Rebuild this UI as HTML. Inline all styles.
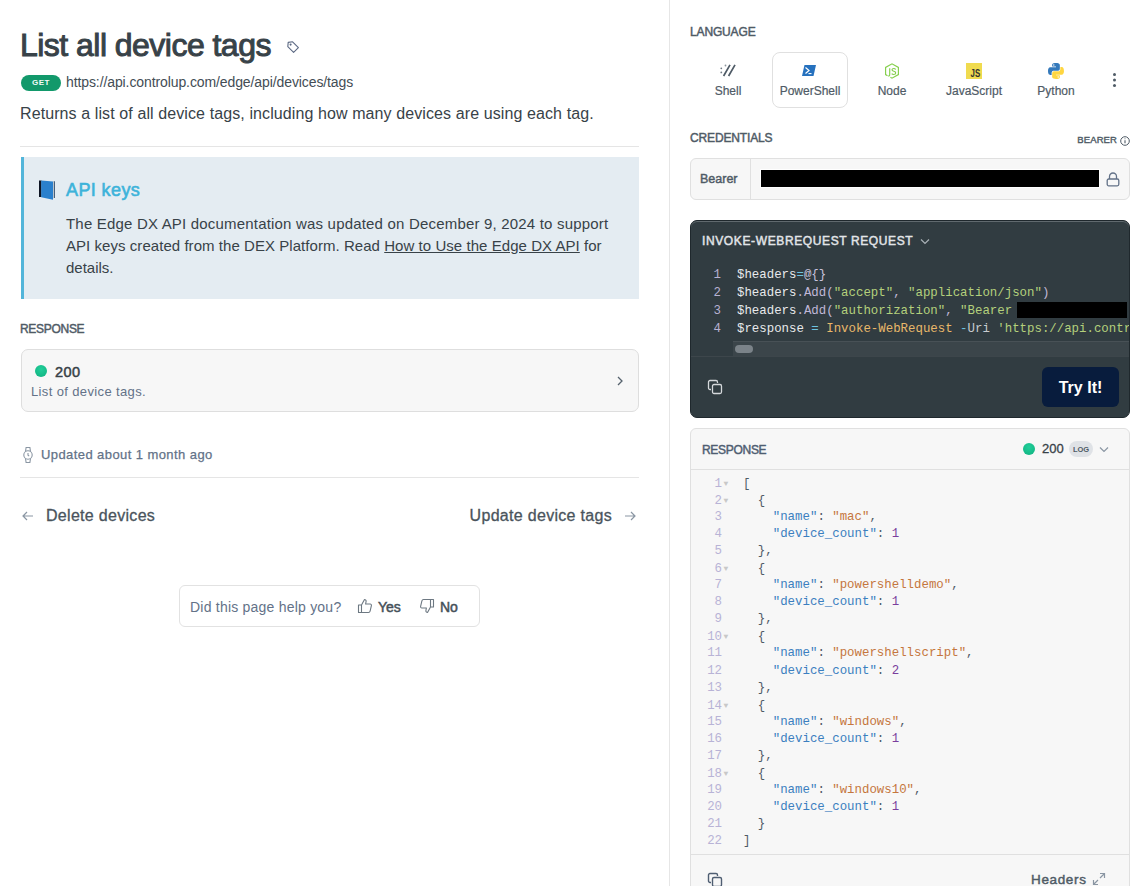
<!DOCTYPE html>
<html><head><meta charset="utf-8">
<style>
*{box-sizing:border-box;margin:0;padding:0}
html,body{width:1137px;height:886px;overflow:hidden;background:#fff;font-family:"Liberation Sans",sans-serif;color:#384248}
.abs{position:absolute}
#left{position:absolute;left:0;top:0;width:669px;height:886px}
#divider{position:absolute;left:669px;top:0;width:1px;height:886px;background:#e6e6e6}
#right{position:absolute;left:670px;top:0;width:467px;height:886px}
.mono{font-family:"Liberation Mono",monospace}
.lbl{font-size:12px;font-weight:normal;-webkit-text-stroke:.45px currentColor;letter-spacing:-.15px;color:#4f5b66;text-transform:uppercase}

.tab{top:84px;width:76px;text-align:center;font-size:12px;color:#4f5b66;white-space:nowrap;-webkit-text-stroke:.2px currentColor}
.code{font-size:12.4px;line-height:18px;white-space:normal}
.code .ln{height:18px;white-space:pre}
.code .n{display:inline-block;width:47px;padding-right:16px;text-align:right;color:#b7b1d1}
.rcode{font-size:12.4px;line-height:17.05px;white-space:normal}
.rcode .ln{height:17.05px;white-space:pre;color:#4f5b66}
.rcode .n{display:inline-block;width:31px;text-align:right;color:#b8b3d6}
.rcode .f{display:inline-block;width:21px;color:#c8c8c8;font-size:8px;vertical-align:1px;padding-left:1.5px}
.k{color:#3b7fc0}.s{color:#c5763d}.d{color:#7a3e9d}
</style></head><body>
<div id="left">
  <div class="abs" style="left:20px;top:26px;font-size:32px;line-height:38px;font-weight:normal;-webkit-text-stroke:1px #384248;letter-spacing:-0.53px;color:#384248;white-space:nowrap">List all device tags</div>
  <svg class="abs" style="left:286px;top:40px" width="14" height="14" viewBox="0 0 14 14" fill="none" stroke="#5d6a84" stroke-width="1.1" stroke-linejoin="round"><path d="M2.2 2.4L6.6 1.8 12.4 7.6 7.6 12.4 1.8 6.6z"/><circle cx="4.6" cy="4.6" r=".5" fill="#5d6a84"/></svg>
  <div class="abs" style="left:21px;top:75px;width:40px;height:16px;border-radius:8px;background:#12996b;color:#f4fbf8;font-size:8px;font-weight:bold;letter-spacing:.55px;text-align:center;line-height:16px">GET</div>
  <div class="abs" style="left:66px;top:73px;font-size:14px;letter-spacing:-0.1px;color:#434d55;white-space:nowrap;line-height:18px">https://api.controlup.com/edge/api/devices/tags</div>
  <div class="abs" style="left:20px;top:103px;font-size:16px;letter-spacing:.1px;color:#384248;white-space:nowrap;line-height:22px">Returns a list of all device tags, including how many devices are using each tag.</div>
  <div class="abs" style="left:20px;top:146px;width:619px;height:1px;background:#e5e5e5"></div>
  <!-- callout -->
  <div class="abs" style="left:21px;top:157px;width:618px;height:142px;background:#e4ecf2;border-left:3px solid #52b5da"></div>
  <svg class="abs" style="left:38px;top:179px" width="18" height="21" viewBox="0 0 18 21"><path d="M1 1.5h2.5v16.5H1z" fill="#0e1524"/><path d="M15.6 2.2h1.3v16.8h-1.3z" fill="#35506e"/><path d="M14.8 2.2h.9v17.2h-.9z" fill="#c8cdd2"/><path d="M3.2 1.6L15 2.4v18.4L3.2 18.2z" fill="#2a80cd"/></svg>
  <div class="abs" style="left:66px;top:179px;font-size:18px;font-weight:normal;-webkit-text-stroke:.6px currentColor;letter-spacing:.4px;color:#3db3da;white-space:nowrap;line-height:22px">API keys</div>
  <div class="abs" style="left:66px;top:213px;font-size:15px;line-height:22px;color:#384248;white-space:nowrap"><span style="letter-spacing:.19px">The Edge DX API documentation was updated on December 9, 2024 to support</span><br><span style="letter-spacing:.05px">API keys created from the DEX Platform. Read <span style="text-decoration:underline">How to Use the Edge DX API</span> for</span><br>details.</div>
  <!-- response -->
  <div class="abs lbl" style="left:20px;top:322px;letter-spacing:-.3px">Response</div>
  <div class="abs" style="left:21px;top:349px;width:618px;height:63px;background:#f7f7f7;border:1px solid #dedede;border-radius:7px"></div>
  <div class="abs" style="left:35px;top:365px;width:12px;height:12px;border-radius:50%;background:radial-gradient(circle at 50% 35%,#22cf9a,#0fb07f)"></div>
  <div class="abs" style="left:55px;top:364px;font-size:14.5px;letter-spacing:.4px;font-weight:normal;-webkit-text-stroke:.5px currentColor;color:#384248">200</div>
  <div class="abs" style="left:31px;top:384px;font-size:13px;letter-spacing:.37px;color:#637288;white-space:nowrap">List of device tags.</div>
  <svg class="abs" style="left:614px;top:375px" width="12" height="12" viewBox="0 0 12 12" fill="none" stroke="#56626d" stroke-width="1.3"><path d="M4 2l4 4-4 4"/></svg>
  <!-- updated -->
  <svg class="abs" style="left:22px;top:446px" width="13" height="18" viewBox="0 0 13 18" fill="none" stroke="#8a96a3" stroke-width="1.1"><circle cx="6" cy="9" r="4.2"/><path d="M6 7v2.2l1.2 1M3.5 5.5l.6-4h3.8l.6 4M3.5 12.5l.6 4h3.8l.6-4"/></svg>
  <div class="abs" style="left:41px;top:447px;font-size:13px;letter-spacing:.42px;-webkit-text-stroke:.25px currentColor;color:#637288;white-space:nowrap">Updated about 1 month ago</div>
  <div class="abs" style="left:20px;top:477px;width:619px;height:1px;background:#e5e5e5"></div>
  <!-- nav -->
  <svg class="abs" style="left:21px;top:509px" width="14" height="14" viewBox="0 0 14 14" fill="none" stroke="#8a96a3" stroke-width="1.2"><path d="M12 7H2M6 3L2 7l4 4"/></svg>
  <div class="abs" style="left:46px;top:507px;font-size:16px;letter-spacing:.3px;-webkit-text-stroke:.3px currentColor;color:#4a545c;white-space:nowrap">Delete devices</div>
  <div class="abs" style="left:369px;top:507px;width:243px;font-size:16px;letter-spacing:.3px;-webkit-text-stroke:.3px currentColor;color:#4a545c;white-space:nowrap;text-align:right">Update device tags</div>
  <svg class="abs" style="left:623px;top:509px" width="14" height="14" viewBox="0 0 14 14" fill="none" stroke="#8a96a3" stroke-width="1.2"><path d="M2 7h10M8 3l4 4-4 4"/></svg>
  <!-- feedback -->
  <div class="abs" style="left:179px;top:585px;width:301px;height:42px;border:1px solid #e2e2e2;border-radius:6px"></div>
  <div class="abs" style="left:190px;top:599px;font-size:14px;letter-spacing:.22px;color:#637288;white-space:nowrap">Did this page help you?</div>
  <svg class="abs" style="left:357px;top:598px" width="16" height="16" viewBox="0 0 16 16" fill="none" stroke="#6d7882" stroke-width="1.1" stroke-linejoin="round"><path d="M1.5 7h3v7.5h-3zM4.5 7l3-5.5c1 0 1.8.8 1.6 1.8L8.6 6h4.6c.8 0 1.4.8 1.2 1.6l-1.3 5.6c-.2.8-.8 1.3-1.6 1.3H4.5"/></svg>
  <div class="abs" style="left:378px;top:599px;font-size:14px;letter-spacing:0px;font-weight:normal;-webkit-text-stroke:.5px currentColor;color:#46515a">Yes</div>
  <svg class="abs" style="left:419px;top:598px" width="16" height="16" viewBox="0 0 16 16" fill="none" stroke="#6d7882" stroke-width="1.1" stroke-linejoin="round"><g transform="rotate(180 8 8)"><path d="M1.5 7h3v7.5h-3zM4.5 7l3-5.5c1 0 1.8.8 1.6 1.8L8.6 6h4.6c.8 0 1.4.8 1.2 1.6l-1.3 5.6c-.2.8-.8 1.3-1.6 1.3H4.5"/></g></svg>
  <div class="abs" style="left:440px;top:599px;font-size:14px;letter-spacing:0px;font-weight:normal;-webkit-text-stroke:.5px currentColor;color:#46515a">No</div>
</div>
<div id="divider"></div>
<div id="right">
  <div class="abs lbl" style="left:20px;top:25px">Language</div>
  <!-- tabs -->
  <div class="abs" style="left:102px;top:52px;width:76px;height:56px;border:1px solid #e0e0e0;border-radius:8px"></div>
  <svg class="abs" style="left:50px;top:64px" width="17" height="13" viewBox="0 0 17 13"><path d="M10 .8L3.6 12M15 .8L8.6 12" stroke="#4f5b66" stroke-width="1.7" stroke-linecap="butt"/><circle cx="1.3" cy="4.3" r=".9" fill="#6f7a84"/><circle cx="1.3" cy="8.4" r=".9" fill="#6f7a84"/><circle cx="5.5" cy="1.5" r=".9" fill="#8d969e"/></svg>
  <div class="abs tab" style="left:20px">Shell</div>
  <svg class="abs" style="left:132px;top:65px" width="14" height="11" viewBox="0 0 14 11"><path d="M2.5 0H14L11.5 11H0z" fill="#2671be"/><path d="M3.5 2.5L7 5.5 3.5 8.5" fill="none" stroke="#fff" stroke-width="1.2"/><path d="M6.5 8.6h3" stroke="#fff" stroke-width="1.1"/></svg>
  <div class="abs tab" style="left:102px">PowerShell</div>
  <svg class="abs" style="left:214px;top:63px" width="16" height="16" viewBox="0 0 16 16" fill="none" stroke="#84cf4b" stroke-width="1.15"><path d="M6.4 14.3L8 15.2 14.4 11.6V4.4L8 .8 1.6 4.4v7.2l1.9 1.1"/><path d="M5.7 5.2v6.6q0 1.4-1.6 1.2"/><path d="M11.7 6.5q-.6-1-2-1-1.6 0-1.7 1.3 0 1.1 1.8 1.5 2 .4 1.9 1.7-.1 1.5-2 1.5-1.4 0-2-.9"/></svg>
  <div class="abs tab" style="left:184px">Node</div>
  <svg class="abs" style="left:296px;top:63px" width="16" height="16" viewBox="0 0 16 16"><rect width="16" height="16" fill="#f0db4f"/><text x="4.6" y="13.9" font-size="10" font-family="Liberation Sans" font-weight="bold" fill="#323330" textLength="9.6" lengthAdjust="spacingAndGlyphs">JS</text></svg>
  <div class="abs tab" style="left:266px">JavaScript</div>
  <svg class="abs" style="left:378px;top:63px" width="16" height="16" viewBox="0 0 256 255"><path fill="#3479bb" d="M126.9.1C62.1.1 66.1 28.2 66.1 28.2l.1 29.1h61.9v8.7H41.6S.1 61.4.1 126.8c0 65.4 36.2 63.1 36.2 63.1H58v-30.4s-1.2-36.2 35.6-36.2H155s34.5.6 34.5-33.3V34S194.7.1 126.9.1zM92.8 19.7a11.1 11.1 0 110 22.3 11.1 11.1 0 010-22.3z"/><path fill="#ffd641" d="M128.8 254.1c64.8 0 60.8-28.1 60.8-28.1l-.1-29.1h-61.9v-8.7h86.4s41.5 4.7 41.5-60.7c0-65.4-36.2-63.1-36.2-63.1h-21.6v30.4s1.2 36.2-35.6 36.2h-61.4s-34.5-.6-34.5 33.3v56S61.9 254.1 128.8 254.1zm34.1-19.6a11.1 11.1 0 110-22.3 11.1 11.1 0 010 22.3z"/></svg>
  <div class="abs tab" style="left:348px">Python</div>
  <div class="abs" style="left:443px;top:73px;width:3px;height:3px;border-radius:50%;background:#4f5b66;box-shadow:0 5.5px 0 #4f5b66,0 11px 0 #4f5b66"></div>
  <!-- credentials -->
  <div class="abs lbl" style="left:20px;top:131px">Credentials</div>
  <div class="abs" style="left:347px;top:134px;width:100px;text-align:right;font-size:9.5px;font-weight:normal;-webkit-text-stroke:.4px currentColor;letter-spacing:.1px;color:#4f5b66">BEARER</div>
  <svg class="abs" style="left:450px;top:136px" width="10" height="10" viewBox="0 0 10 10" fill="none" stroke="#4f5b66" stroke-width="1"><circle cx="5" cy="5" r="4.3"/><path d="M5 4.3v3" stroke-width="1.1"/><circle cx="5" cy="2.8" r=".5" fill="#4f5b66" stroke="none"/></svg>
  <div class="abs" style="left:20px;top:158px;width:440px;height:42px;border:1px solid #e0e0e0;border-radius:6px;background:#f7f7f7;overflow:hidden">
    <div class="abs" style="left:59px;top:0;width:1px;height:40px;background:#e0e0e0"></div>
  </div>
  <div class="abs" style="left:30px;top:171.5px;font-size:12.5px;letter-spacing:0px;font-weight:normal;-webkit-text-stroke:.45px currentColor;color:#4f5b66">Bearer</div>
  <div class="abs" style="left:91px;top:170px;width:338px;height:17px;background:#000;box-shadow:0 0 0 1px #fff"></div>
  <svg class="abs" style="left:436px;top:172px" width="14" height="15" viewBox="0 0 14 15" fill="none" stroke="#637288" stroke-width="1.3"><path d="M3.5 7V4.5a3.5 3.5 0 017 0V7"/><rect x="1.2" y="7" width="11.6" height="6.8" rx="1.5"/></svg>
  <!-- request box -->
  <div class="abs" style="left:20px;top:220px;width:440px;height:198px;background:#313c41;border-radius:7px;border:1px solid #1f282d;box-shadow:inset 0 1px 0 #60696e;overflow:hidden">
    <div class="abs" style="left:11px;top:13px;font-size:12px;font-weight:normal;-webkit-text-stroke:.45px currentColor;letter-spacing:.62px;color:#e2e5e8;white-space:nowrap">INVOKE-WEBREQUEST REQUEST</div>
    <svg class="abs" style="left:229px;top:17px" width="10" height="7" viewBox="0 0 10 7" fill="none" stroke="#aab1b7" stroke-width="1.2"><path d="M1 1.5l4 4 4-4"/></svg>
    <div class="abs mono code" style="left:-1px;top:45px;width:438px">
      <div class="ln"><span class="n">1</span><span style="color:#e8eaec">$headers</span><span style="color:#6ec3e0">=</span><span style="color:#c9c3dd">@{}</span></div>
      <div class="ln"><span class="n">2</span><span style="color:#e8eaec">$headers</span><span style="color:#c0b8d8">.Add(</span><span style="color:#b4d07c">"accept"</span><span style="color:#c0b8d8">, </span><span style="color:#b4d07c">"application/json"</span><span style="color:#c0b8d8">)</span></div>
      <div class="ln"><span class="n">3</span><span style="color:#e8eaec">$headers</span><span style="color:#c0b8d8">.Add(</span><span style="color:#b4d07c">"authorization"</span><span style="color:#c0b8d8">, </span><span style="color:#b4d07c">"Bearer </span><span style="display:inline-block;width:110px;height:16px;margin-left:-3px;background:#000;vertical-align:-4px"></span><span style="color:#b4d07c">:</span></div>
      <div class="ln"><span class="n">4</span><span style="color:#e8eaec">$response </span><span style="color:#6ec3e0">=</span><span style="color:#e8eaec"> </span><span style="color:#e8b86a">Invoke-WebRequest</span><span style="color:#e8eaec"> </span><span style="color:#6ec3e0">-</span><span style="color:#c8ccd0">Uri</span><span style="color:#e8eaec"> </span><span style="color:#b4d07c">'https://api.controlup.com/edge/api/devices/tags'</span></div>
    </div>
    <div class="abs" style="left:42px;top:120px;width:400px;height:15px;background:#3b454a;border-top:1px solid #485156"></div>
    <div class="abs" style="left:44px;top:124px;width:18px;height:8px;border-radius:4px;background:#7b8389"></div>
    <div class="abs" style="left:0;top:135px;width:440px;height:1px;background:#3d464b"></div>
    <svg class="abs" style="left:16px;top:158px" width="16" height="16" viewBox="0 0 16 16" fill="none" stroke="#d5d8db" stroke-width="1.3"><path d="M4 10.5H3a1.5 1.5 0 01-1.5-1.5V3A1.5 1.5 0 013 1.5h6A1.5 1.5 0 0110.5 3v1"/><rect x="5.5" y="5.5" width="9" height="9" rx="1.5"/></svg>
    <div class="abs" style="left:351px;top:146px;width:77px;height:40px;border-radius:6px;background:#081c3d;color:#fff;font-size:16px;font-weight:bold;text-align:center;line-height:42px">Try It!</div>
  </div>
  <!-- response box -->
  <div class="abs" style="left:20px;top:428px;width:440px;height:470px;background:#f7f7f7;border:1px solid #e0e0e0;border-radius:6px;overflow:hidden">
    <div class="abs lbl" style="left:11px;top:14px;color:#4f5e72;letter-spacing:-.3px">Response</div>
    <div class="abs" style="left:332px;top:14px;width:12px;height:12px;border-radius:50%;background:radial-gradient(circle at 50% 35%,#22cf9a,#0fb07f)"></div>
    <div class="abs" style="left:351px;top:12px;font-size:13px;-webkit-text-stroke:.3px currentColor;color:#384248">200</div>
    <div class="abs" style="left:378px;top:12px;width:24px;height:16px;border-radius:8px;background:#dfe2e6;color:#4f5b66;font-size:7.5px;font-weight:bold;text-align:center;line-height:18px">LOG</div>
    <svg class="abs" style="left:408px;top:17px" width="10" height="7" viewBox="0 0 10 7" fill="none" stroke="#8a96a3" stroke-width="1.2"><path d="M1 1.5l4 4 4-4"/></svg>
    <div class="abs" style="left:0;top:40px;width:440px;height:1px;background:#e0e0e0"></div>
    <div class="abs mono rcode" style="left:0;top:46px;width:438px"><div class="ln"><span class="n">1</span><span class="f">▼</span>[</div><div class="ln"><span class="n">2</span><span class="f">▼</span>  {</div><div class="ln"><span class="n">3</span><span class="f"></span>    <span class="k">&quot;name&quot;</span>: <span class="s">&quot;mac&quot;</span>,</div><div class="ln"><span class="n">4</span><span class="f"></span>    <span class="k">&quot;device_count&quot;</span>: <span class="d">1</span></div><div class="ln"><span class="n">5</span><span class="f"></span>  },</div><div class="ln"><span class="n">6</span><span class="f">▼</span>  {</div><div class="ln"><span class="n">7</span><span class="f"></span>    <span class="k">&quot;name&quot;</span>: <span class="s">&quot;powershelldemo&quot;</span>,</div><div class="ln"><span class="n">8</span><span class="f"></span>    <span class="k">&quot;device_count&quot;</span>: <span class="d">1</span></div><div class="ln"><span class="n">9</span><span class="f"></span>  },</div><div class="ln"><span class="n">10</span><span class="f">▼</span>  {</div><div class="ln"><span class="n">11</span><span class="f"></span>    <span class="k">&quot;name&quot;</span>: <span class="s">&quot;powershellscript&quot;</span>,</div><div class="ln"><span class="n">12</span><span class="f"></span>    <span class="k">&quot;device_count&quot;</span>: <span class="d">2</span></div><div class="ln"><span class="n">13</span><span class="f"></span>  },</div><div class="ln"><span class="n">14</span><span class="f">▼</span>  {</div><div class="ln"><span class="n">15</span><span class="f"></span>    <span class="k">&quot;name&quot;</span>: <span class="s">&quot;windows&quot;</span>,</div><div class="ln"><span class="n">16</span><span class="f"></span>    <span class="k">&quot;device_count&quot;</span>: <span class="d">1</span></div><div class="ln"><span class="n">17</span><span class="f"></span>  },</div><div class="ln"><span class="n">18</span><span class="f">▼</span>  {</div><div class="ln"><span class="n">19</span><span class="f"></span>    <span class="k">&quot;name&quot;</span>: <span class="s">&quot;windows10&quot;</span>,</div><div class="ln"><span class="n">20</span><span class="f"></span>    <span class="k">&quot;device_count&quot;</span>: <span class="d">1</span></div><div class="ln"><span class="n">21</span><span class="f"></span>  }</div><div class="ln"><span class="n">22</span><span class="f"></span>]</div></div>
    <div class="abs" style="left:0;top:425px;width:440px;height:1px;background:#e0e0e0"></div>
    <svg class="abs" style="left:16px;top:443px" width="16" height="16" viewBox="0 0 16 16" fill="none" stroke="#4f5e72" stroke-width="1.4"><path d="M4 10.5H3a1.5 1.5 0 01-1.5-1.5V3A1.5 1.5 0 013 1.5h6A1.5 1.5 0 0110.5 3v1"/><rect x="5.5" y="5.5" width="9" height="9" rx="1.5"/></svg>
    <div class="abs" style="left:340px;top:443px;font-size:13.5px;letter-spacing:.65px;font-weight:normal;-webkit-text-stroke:.45px currentColor;color:#4f5b66">Headers</div>
    <svg class="abs" style="left:401px;top:443px" width="14" height="14" viewBox="0 0 14 14" fill="none" stroke="#8a96a3" stroke-width="1.2"><path d="M8 1.5h4.5V6M12.5 1.5L8 6M6 12.5H1.5V8M1.5 12.5L6 8"/></svg>
  </div>
</div>
</body></html>
